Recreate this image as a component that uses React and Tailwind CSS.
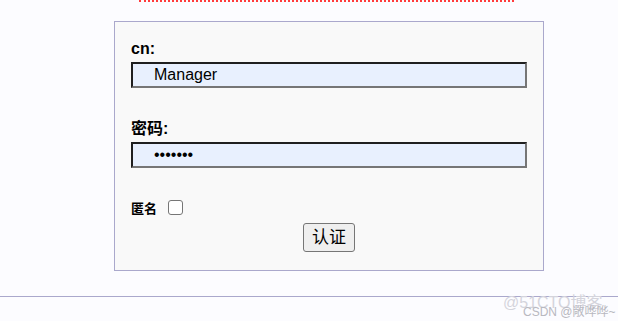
import React from 'react';

const cjk = { fontFamily: '"Liberation Sans", "Noto Sans CJK SC", sans-serif' };

const Field = ({ label, type, value, top }) => (
    <div className={top}>
        <label className="block text-[16px] leading-[18px] font-bold text-black">{label}</label>
        <input
            type={type}
            defaultValue={value}
            readOnly
            className="mt-[4px] block w-[396px] h-[26px] pl-[21px] text-[16px] text-black bg-[#e8f0fe] border-2 border-t-[#1f1f1f] border-l-[#1f1f1f] border-b-[#767676] border-r-[#767676] outline-none"
            style={cjk}
        />
    </div>
);

const App = () => {
    return (
        <div className="relative w-full h-[321px] overflow-hidden bg-[#fcfcff]" style={cjk}>
            <div className="ml-[139px] w-[375px] border-t-2 border-dotted border-[#ff3b3b]"></div>

            <div className="ml-[114px] mt-[19px] w-[430px] h-[250px] border border-[#aaa8cc] bg-[#f9f9f9] pl-[16px] pt-[18px]">
                <Field label="cn:" type="text" value="Manager" />
                <Field label="密码:" type="password" value="1234567" top="mt-[32px]" />

                <div className="mt-[31px] flex items-end h-[18px]">
                    <span className="text-[13px] leading-[16px] font-bold text-black">匿名</span>
                    <input
                        type="checkbox"
                        className="ml-[11px] mb-[2px] appearance-none w-[15px] h-[15px] rounded-[3px] border border-[#767676] bg-white"
                    />
                </div>

                <div className="mt-[6px] flex justify-center pr-[16px]">
                    <button className="w-[52px] h-[29px] text-[17px] leading-[20px] text-black bg-[#efefef] border border-[#767676] rounded-[3px]">
                        认证
                    </button>
                </div>
            </div>

            <div className="mt-[25px] border-t border-[#aaa8cc]"></div>

            <span className="absolute left-[503px] top-[291px] text-[16px] text-[#d4d4dc] whitespace-nowrap">@51CTO博客</span>
            <span className="absolute left-[523px] top-[303px] text-[12px] text-[#b8b8c0] whitespace-nowrap">CSDN @敞哗哗~</span>
        </div>
    );
};

export default App;
